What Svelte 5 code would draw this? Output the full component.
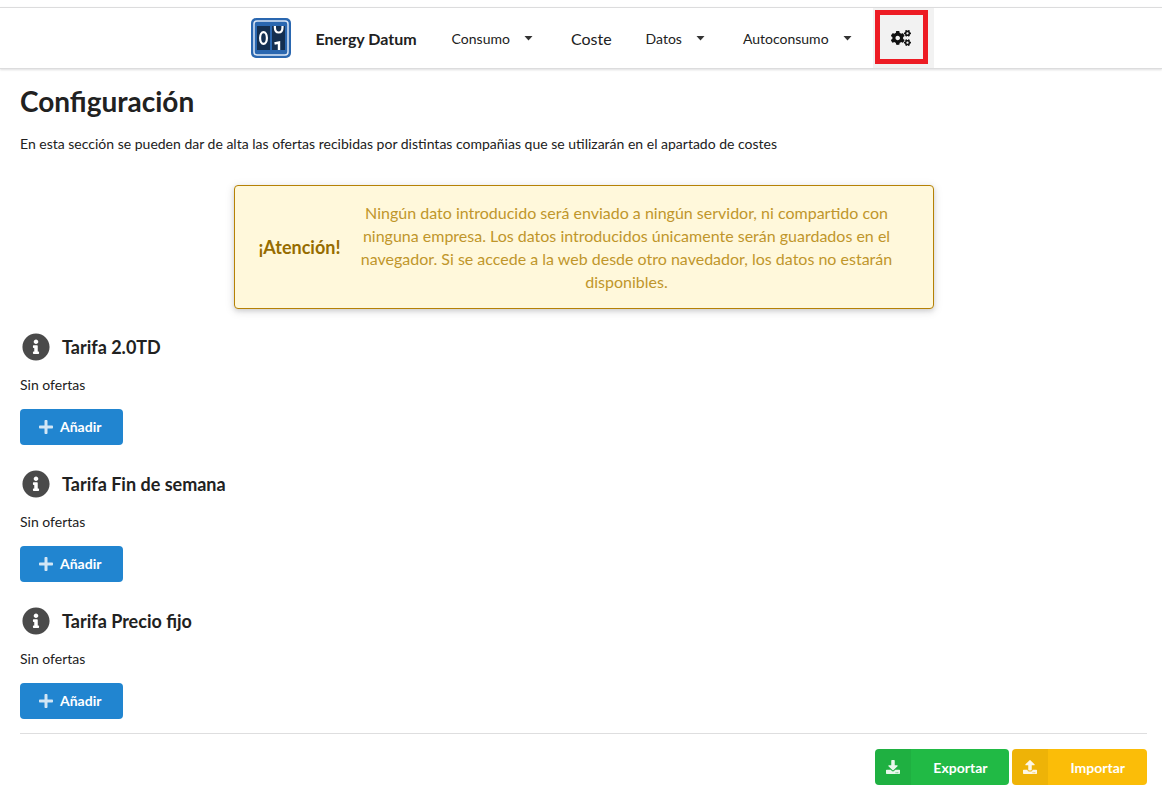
<script>
  const tariffs = ['Tarifa 2.0TD', 'Tarifa Fin de semana', 'Tarifa Precio fijo'];

  const smallCog =
    'M512.1 191l-8.2 14.3c-3 5.3-9.4 7.5-15.1 5.4-11.8-4.4-22.6-10.7-32.1-18.6-4.6-3.8-5.8-10.5-2.8-15.7l8.2-14.3c-6.9-8-12.3-17.3-15.9-27.4h-16.5c-6 0-11.2-4.3-12.2-10.3-2-12-2.1-24.6 0-37.1 1-6 6.2-10.4 12.2-10.4h16.5c3.6-10.1 9-19.4 15.9-27.4l-8.2-14.3c-3-5.2-1.9-11.9 2.8-15.7 9.5-7.9 20.4-14.2 32.1-18.6 5.7-2.1 12.1.1 15.1 5.4l8.2 14.3c10.5-1.9 21.2-1.9 31.7 0L552 6.3c3-5.3 9.4-7.5 15.1-5.4 11.8 4.4 22.6 10.7 32.1 18.6 4.6 3.8 5.8 10.5 2.8 15.7l-8.2 14.3c6.9 8 12.3 17.3 15.9 27.4h16.5c6 0 11.2 4.3 12.2 10.3 2 12 2.1 24.6 0 37.1-1 6-6.2 10.4-12.2 10.4h-16.5c-3.6 10.1-9 19.4-15.9 27.4l8.2 14.3c3 5.2 1.9 11.9-2.8 15.7-9.5 7.9-20.4 14.2-32.1 18.6-5.7 2.1-12.1-.1-15.1-5.4l-8.2-14.3c-10.4 1.9-21.2 1.9-31.7 0zm-10.5-58.8c38.5 29.6 82.4-14.3 52.8-52.8-38.5-29.7-82.4 14.3-52.8 52.8z';
  const bigCog =
    'M386.3 286.1l33.7 16.8c10.1 5.8 14.5 18.1 10.5 29.1-8.9 24.2-26.4 46.4-42.6 65.8-7.4 8.9-20.2 11.1-30.3 5.3l-29.1-16.8c-16 13.7-34.6 24.6-54.9 31.7v33.6c0 11.6-8.3 21.6-19.7 23.6-24.6 4.2-50.4 4.4-75.9 0-11.5-2-20-11.9-20-23.6V418c-20.3-7.2-38.9-18-54.9-31.7L74 403c-10 5.8-22.9 3.6-30.3-5.3-16.2-19.4-33.3-41.6-42.2-65.7-4-10.9.4-23.2 10.5-29.1l33.3-16.8c-3.9-20.9-3.9-42.4 0-63.4L12 205.8c-10.1-5.8-14.6-18.1-10.5-29 8.9-24.2 26-46.4 42.2-65.8 7.4-8.9 20.2-11.1 30.3-5.3l29.1 16.8c16-13.7 34.6-24.6 54.9-31.7V57.1c0-11.5 8.2-21.5 19.6-23.5 24.6-4.2 50.5-4.4 76-.1 11.5 2 20 11.9 20 23.6v33.6c20.3 7.2 38.9 18 54.9 31.7l29.1-16.8c10-5.8 22.9-3.6 30.3 5.3 16.2 19.4 33.2 41.6 42.1 65.8 4 10.9.1 23.2-10 29.1l-33.7 16.8c3.9 21 3.9 42.5 0 63.5zm-117.6 21.1c59.2-77-28.7-164.9-105.7-105.7-59.2 77 28.7 164.9 105.7 105.7z';
  const info =
    'M256 8C119.043 8 8 119.083 8 256c0 136.997 111.043 248 248 248s248-111.003 248-248C504 119.083 392.957 8 256 8zm0 110c23.196 0 42 18.804 42 42s-18.804 42-42 42-42-18.804-42-42 18.804-42 42-42zm56 254c0 6.627-5.373 12-12 12h-88c-6.627 0-12-5.373-12-12v-24c0-6.627 5.373-12 12-12h12v-64h-12c-6.627 0-12-5.373-12-12v-24c0-6.627 5.373-12 12-12h64c6.627 0 12 5.373 12 12v100h12c6.627 0 12 5.373 12 12v24z';
  const plus =
    'M416 208H272V64c0-17.67-14.33-32-32-32h-32c-17.67 0-32 14.33-32 32v144H32c-17.67 0-32 14.33-32 32v32c0 17.67 14.33 32 32 32h144v144c0 17.67 14.33 32 32 32h32c17.67 0 32-14.33 32-32V304h144c17.67 0 32-14.33 32-32v-32c0-17.67-14.33-32-32-32z';
  const trayDots =
    'm-124 88c0-11-9-20-20-20s-20 9-20 20 9 20 20 20 20-9 20-20zm64 0c0-11-9-20-20-20s-20 9-20 20 9 20 20 20 20-9 20-20z';
  const download =
    'M216 0h80c13.3 0 24 10.7 24 24v168h87.7c17.8 0 26.7 21.5 14.1 34.1L269.7 378.3c-7.5 7.5-19.8 7.5-27.3 0L90.1 226.1c-12.6-12.6-3.7-34.1 14.1-34.1H192V24c0-13.3 10.7-24 24-24zm296 376v112c0 13.3-10.7 24-24 24H24c-13.3 0-24-10.7-24-24V376c0-13.3 10.7-24 24-24h146.7l49 49c20.1 20.1 52.5 20.1 72.6 0l49-49H488c13.3 0 24 10.7 24 24z' + trayDots;
  const upload =
    'M296 384h-80c-13.3 0-24-10.7-24-24V192h-87.7c-17.8 0-26.7-21.5-14.1-34.1L242.3 5.7c7.5-7.5 19.8-7.5 27.3 0l152.2 152.2c12.6 12.6 3.7 34.1-14.1 34.1H320v168c0 13.3-10.7 24-24 24zm216-8v112c0 13.3-10.7 24-24 24H24c-13.3 0-24-10.7-24-24V376c0-13.3 10.7-24 24-24h136v8c0 30.9 25.1 56 56 56h80c30.9 0 56-25.1 56-56v-8h136c13.3 0 24 10.7 24 24z' + trayDots;
</script>

{#snippet menu(label)}
  <button class="item" type="button" aria-haspopup="true">
    {label}
    <svg class="caret" viewBox="0 0 9 5" aria-hidden="true"><path d="M.5 0h8L4.500 4.500z" /></svg>
  </button>
{/snippet}

<nav class="bar">
  <a class="brand" href="#inicio">
    <svg class="logo" viewBox="0 0 40 40" aria-hidden="true">
      <rect width="40" height="40" rx="5" fill="#2a67b0" />
      <rect x="3" y="3" width="34" height="34" rx="3" fill="none" stroke="#dbe7f6" stroke-width="1.500" />
      <rect x="6" y="8" width="13" height="24" fill="#142f50" />
      <rect x="21" y="8" width="13" height="24" fill="#142f50" />
      <ellipse cx="12.500" cy="20" rx="3.400" ry="5.800" fill="none" stroke="#fff" stroke-width="2.200" />
      <path d="M23.900 8v1.500c0 3 1.500 5 3.800 5s3.800-2 3.800-5V8" fill="none" stroke="#fff" stroke-width="2.200" />
      <path d="M23.500 25.500l4.500-1V32" fill="none" stroke="#fff" stroke-width="2.400" />
    </svg>
    <span>Energy Datum</span>
  </a>
  {@render menu('Consumo')}
  <a class="item cost" href="#coste">Coste</a>
  {@render menu('Datos')}
  {@render menu('Autoconsumo')}
  <a class="item settings" href="#configuracion" aria-label="Configuración">
    <svg class="cogs" viewBox="0 0 640 512" aria-hidden="true">
      <path d={bigCog} />
      <path d={smallCog} />
      <path d={smallCog} transform="translate(0 299)" />
    </svg>
  </a>
</nav>

<main>
  <h1>Configuración</h1>
  <p class="intro">En esta sección se pueden dar de alta las ofertas recibidas por distintas compañias que se utilizarán en el apartado de costes</p>

  <div class="warning" role="note">
    <strong>¡Atención!</strong>
    <p>Ningún dato introducido será enviado a ningún servidor, ni compartido con ninguna empresa. Los datos introducidos únicamente serán guardados en el navegador. Si se accede a la web desde otro navedador, los datos no estarán disponibles.</p>
  </div>

  {#each tariffs as tariff}
    <section>
      <h2>
        <svg class="info" viewBox="0 0 512 512" aria-hidden="true"><path d={info} /></svg>
        {tariff}
      </h2>
      <p>Sin ofertas</p>
      <button class="add" type="button">
        <svg viewBox="0 0 448 512" aria-hidden="true"><path d={plus} /></svg>
        Añadir
      </button>
    </section>
  {/each}

  <footer>
    <button class="labeled export" type="button">
      <span class="cell"><svg viewBox="0 0 512 512" aria-hidden="true"><path d={download} /></svg></span>
      <span class="label">Exportar</span>
    </button>
    <button class="labeled import" type="button">
      <span class="cell"><svg viewBox="0 0 512 512" aria-hidden="true"><path d={upload} /></svg></span>
      <span class="label">Importar</span>
    </button>
  </footer>
</main>

<style>
  :global(body) {
    margin: 0;
    background: #fff;
    color: #212121;
    font: 14px/20px Lato, sans-serif;
  }
  button {
    border: 0;
    font: inherit;
    cursor: pointer;
  }
  svg {
    display: block;
    flex: none;
    fill: currentColor;
  }
  p {
    margin: 0;
  }
  .bar {
    display: flex;
    justify-content: center;
    height: 60px;
    margin-top: 7px;
    border: solid #dcdcdd;
    border-width: 1px 0;
    box-shadow: 0 1px 2px rgba(34, 36, 38, 0.15);
  }
  .brand,
  .item {
    display: flex;
    align-items: center;
    color: #212121;
    text-decoration: none;
    white-space: nowrap;
  }
  .brand {
    gap: 24px;
    padding: 0 18px 0 23px;
    font-size: 16px;
    font-weight: 700;
  }
  .brand span {
    padding-top: 2px;
  }
  .logo {
    width: 40px;
    height: 40px;
  }
  .item {
    padding: 2px 17px 0;
    background: none;
  }
  .item.cost {
    font-size: 16px;
  }
  .caret {
    width: 9px;
    height: 5px;
    margin: 0 4px 2px 14px;
    color: #333;
  }
  .item.settings {
    position: relative;
    padding: 0 23px 0 18px;
    background: #f2f2f2;
    color: #111;
  }
  .settings::after {
    content: '';
    position: absolute;
    inset: 2px 6px 4px 2px;
    border: 5px solid #ed1c24;
  }
  .cogs {
    width: 20px;
    height: 16px;
  }
  main {
    padding: 14px 15px 13px 20px;
  }
  h1 {
    margin: 0 0 15px;
    font-size: 28px;
    line-height: 36px;
  }
  .warning {
    display: flex;
    align-items: center;
    gap: 18px;
    box-sizing: border-box;
    max-width: 700px;
    margin: 31px auto 24px;
    padding: 15px 38px 15px 24px;
    border: 1px solid #b58105;
    border-radius: 4px;
    background: #fff8db;
    box-shadow: 0 2px 4px rgba(34, 36, 38, 0.12), 0 2px 10px rgba(34, 36, 38, 0.15);
    color: #bf962b;
    font-size: 16px;
    line-height: 23px;
    text-align: center;
  }
  .warning strong {
    color: #966c00;
    font-size: 18px;
  }
  section {
    margin-bottom: 25px;
  }
  h2 {
    display: flex;
    align-items: center;
    gap: 12px;
    margin: 0 0 14px;
    padding-left: 2px;
    font-size: 18px;
    line-height: 28px;
  }
  .info {
    width: 28px;
    height: 28px;
    color: #4a4a4a;
  }
  .add {
    display: flex;
    align-items: center;
    gap: 7px;
    height: 36px;
    margin-top: 14px;
    padding: 0 22px 0 19px;
    border-radius: 4px;
    background: #2185d0;
    color: #fff;
    font-weight: 700;
  }
  .add svg {
    width: 14px;
    height: 16px;
    opacity: 0.8;
  }
  footer {
    display: flex;
    justify-content: flex-end;
    gap: 3px;
    margin-top: -11px;
    padding-top: 15px;
    border-top: 1px solid #dededf;
  }
  .labeled {
    display: flex;
    height: 36px;
    padding: 0;
    overflow: hidden;
    border-radius: 4px;
    color: #fff;
    font-weight: 700;
  }
  .export {
    background: #21ba45;
  }
  .import {
    background: #fbbd08;
  }
  .cell {
    display: flex;
    align-items: center;
    justify-content: center;
    width: 36px;
    height: 36px;
    background: rgba(0, 0, 0, 0.05);
  }
  .cell svg {
    width: 14px;
    height: 14px;
    opacity: 0.9;
  }
  .label {
    padding: 0 22px;
    line-height: 38px;
  }
</style>
